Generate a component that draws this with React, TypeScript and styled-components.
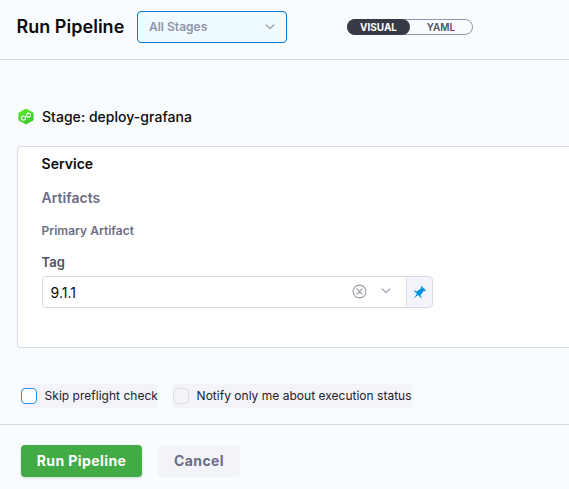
import React from 'react';
import styled, { createGlobalStyle } from 'styled-components';

const GlobalStyle = createGlobalStyle`
  * { box-sizing: border-box; }
  body { margin: 0; background: #f9fcff; overflow: hidden; font-family: Inter, sans-serif; -webkit-font-smoothing: antialiased; }
  button { font-family: inherit; cursor: pointer; }
`;

const Page = styled.div`
  display: flex;
  flex-direction: column;
  width: 100%;
  height: 489px;
  background: #f9fcff;
`;

const Header = styled.header`
  display: flex;
  align-items: center;
  flex: 0 0 60px;
  padding: 0 0 6px 16px;
  border-bottom: 1px solid #d9dae5;
`;

const Title = styled.h1`
  margin: 0;
  width: 121px;
  padding-left: 0.4px;
  font-size: 18px;
  line-height: 24px;
  font-weight: 600;
  letter-spacing: 0.03px;
  color: #0b0b0d;
  white-space: nowrap;
`;

const StageSelect = styled.button`
  display: flex;
  align-items: center;
  justify-content: space-between;
  width: 150px;
  height: 32px;
  padding: 0 11px 0 11px;
  border: 1px solid #0278d5;
  border-radius: 4px;
  background: #effbff;
  color: #9293ab;
  font-size: 12px;
  font-weight: 600;
`;

const Toggle = styled.div`
  display: flex;
  width: 126px;
  height: 16px;
  margin-left: 60px;
  border: 1px solid #9293ab;
  border-radius: 8px;
`;

const ToggleOption = styled.button<{ $active?: boolean }>`
  width: ${p => (p.$active ? '63px' : '62px')};
  height: 16px;
  margin: -1px 0 0 ${p => (p.$active ? '-1px' : '0')};
  padding: 0;
  border: 0;
  border-radius: 8px;
  background: ${p => (p.$active ? '#383946' : 'transparent')};
  color: ${p => (p.$active ? '#fff' : '#4f5162')};
  font-size: 10px;
  line-height: 16px;
  font-weight: ${p => (p.$active ? 700 : 600)};
`;

const Content = styled.main`
  display: flex;
  flex-direction: column;
  flex: 1;
  padding: 47px 0 0 17px;
`;

const StageHeading = styled.div`
  display: flex;
  align-items: center;
  gap: 8px;
  height: 20px;
  color: #0b0b0d;
  font-size: 14px;
  font-weight: 500;
  letter-spacing: 0.03px;
  white-space: nowrap;
  padding-bottom: 1px;
`;

const Card = styled.section`
  height: 202px;
  margin-top: 19px;
  padding: 7px 0 0 24px;
  border: 1px solid #d9dae5;
  border-right: 0;
  border-radius: 4px 0 0 4px;
  background: #fff;
`;

const Heading = styled.h2<{ $size: number; $top?: number; $color: string }>`
  margin: ${p => p.$top ?? 0}px 0 0 -0.5px;
  font-size: ${p => p.$size}px;
  line-height: 20px;
  font-weight: 600;
  letter-spacing: 0.02px;
  color: ${p => p.$color};
`;

const TagField = styled.div`
  display: flex;
  width: 391px;
  height: 32px;
  margin-top: 4px;
  border: 1px solid #d9dae5;
  border-radius: 4px;
  background: #f3f3fa;
  overflow: hidden;
`;

const TagInput = styled.div`
  display: flex;
  align-items: center;
  width: 364px;
  padding: 1px 15px 0 7.6px;
  border-right: 1px solid #d9dae5;
  border-radius: 0 4px 4px 0;
  background: #fff;
  color: #0b0b0d;
  font-size: 14px;
`;

const FieldIcons = styled.span`
  display: flex;
  align-items: center;
  gap: 14px;
  margin: -3px 0 0 auto;
`;

const PinButton = styled.button`
  display: flex;
  align-items: center;
  justify-content: center;
  width: 25px;
  padding: 0;
  border: 0;
  background: transparent;
`;

const Options = styled.div`
  display: flex;
  gap: 16px;
  margin: 36px 0 0 4px;
`;

const Option = styled.label<{ $width: number }>`
  display: flex;
  align-items: center;
  width: ${p => p.$width}px;
  height: 24px;
  border-radius: 4px;
  background: #f3f3fa;
  color: #22222a;
  font-size: 12px;
  white-space: nowrap;
`;

const OptionText = styled.span`
  padding-bottom: 2px;
  letter-spacing: 0.015px;
`;

const Checkbox = styled.span<{ $disabled?: boolean }>`
  flex: 0 0 16px;
  height: 16px;
  margin-right: 7.6px;
  border: 1px solid ${p => (p.$disabled ? '#dfdfe8' : '#2b8fdd')};
  border-radius: 4px;
  background: ${p => (p.$disabled ? '#f3f3fa' : '#fff')};
`;

const Footer = styled.footer`
  display: flex;
  flex: 0 0 65px;
  gap: 16px;
  padding: 20px 21px 0;
  border-top: 1px solid #d9dae5;
`;

const Action = styled.button<{ $primary?: boolean }>`
  width: ${p => (p.$primary ? '121px' : '82px')};
  height: 32px;
  padding: 0 0 1px;
  border: 0;
  border-radius: 4px;
  background: ${p => (p.$primary ? '#42ab45' : '#f3f3fa')};
  color: ${p => (p.$primary ? '#fff' : '#6b6d85')};
  box-shadow: ${p => (p.$primary ? '0 1px 3px rgba(40, 41, 61, 0.18)' : 'none')};
  font-size: 14px;
  font-weight: 700;
  letter-spacing: 0.42px;
  white-space: nowrap;
`;

const Chevron = ({ color }: { color: string }) => (
  <svg width="10" height="6" viewBox="0 0 10 6" fill="none">
    <path d="M1.2 1 5 4.7 8.8 1" stroke={color} strokeWidth="1.1" strokeLinecap="round" strokeLinejoin="round" />
  </svg>
);

const StageIcon = () => (
  <svg width="17" height="17" viewBox="0 0 17 17" fill="none">
    <defs>
      <linearGradient id="stageGreen" x1="4" y1="1" x2="13" y2="16" gradientUnits="userSpaceOnUse">
        <stop stopColor="#5bea24" />
        <stop offset="1" stopColor="#39c72e" />
      </linearGradient>
    </defs>
    <path d="M8.2 1Q9 .5 9.8 1L15.8 4.3Q16.6 4.8 16.6 5.6V11.5Q16.6 12.4 15.8 12.8L9.8 16.1Q9 16.6 8.2 16.1L2.2 12.8Q1.4 12.4 1.4 11.5V5.6Q1.4 4.8 2.2 4.3Z" fill="url(#stageGreen)" />
    <path d="M7.5 8.4A2 2 0 1 0 8.4 10.4C8.5 9.1 9.5 8.5 9.6 7A2 2 0 1 1 10.4 8.7" stroke="#fff" strokeWidth="1.1" strokeLinecap="round" strokeLinejoin="round" />
  </svg>
);

const ClearIcon = () => (
  <svg width="15" height="15" viewBox="0 0 15 15" fill="none" stroke="#9a9bab">
    <circle cx="7.5" cy="7.5" r="6.4" strokeWidth="1.1" />
    <path d="m4.9 4.9 5.2 5.2m0-5.2-5.2 5.2" strokeWidth="1.2" strokeLinecap="round" />
  </svg>
);

const PinIcon = () => (
  <svg width="14" height="14" viewBox="0 0 16 16" fill="#0092e4">
    <path d="M9.41.92c-.51.51-.41 1.5.15 2.56L4.34 7.54C2.8 6.48 1.45 6.05.92 6.58l3.54 3.54-3.54 4.95 4.95-3.54 3.54 3.54c.53-.53.1-1.88-.96-3.42l4.06-5.22c1.06.56 2.04.66 2.55.15L9.41.92z" />
  </svg>
);

export default function App() {
  return (
    <>
      <GlobalStyle />
      <Page>
        <Header>
          <Title>Run Pipeline</Title>
          <StageSelect>All Stages<Chevron color="#9293ab" /></StageSelect>
          <Toggle>
            <ToggleOption $active>VISUAL</ToggleOption>
            <ToggleOption>YAML</ToggleOption>
          </Toggle>
        </Header>
        <Content>
          <StageHeading><StageIcon />Stage: deploy-grafana</StageHeading>
          <Card>
            <Heading $size={14} $color="#0b0b0d">Service</Heading>
            <Heading $size={14} $top={14} $color="#6b6d85">Artifacts</Heading>
            <Heading $size={12} $top={13} $color="#6b6d85">Primary Artifact</Heading>
            <Heading $size={13} $top={11} $color="#4f5162">Tag</Heading>
            <TagField>
              <TagInput>
                9.1.1
                <FieldIcons><ClearIcon /><Chevron color="#9a9bab" /></FieldIcons>
              </TagInput>
              <PinButton aria-label="Pin value"><PinIcon /></PinButton>
            </TagField>
          </Card>
          <Options>
            <Option $width={136}><Checkbox /><OptionText>Skip preflight check</OptionText></Option>
            <Option $width={239}><Checkbox $disabled /><OptionText>Notify only me about execution status</OptionText></Option>
          </Options>
        </Content>
        <Footer>
          <Action $primary>Run Pipeline</Action>
          <Action>Cancel</Action>
        </Footer>
      </Page>
    </>
  );
}
